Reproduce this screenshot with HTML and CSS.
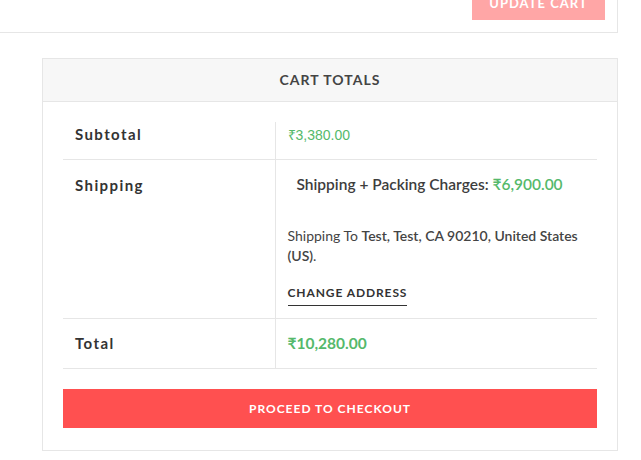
FILE: index.html
```html
<!DOCTYPE html>
<html>
<head>
<meta charset="utf-8">
<link rel="stylesheet" href="styles.css">
</head>
<body>
<div class="cart-actions">
  <button class="btn-update">UPDATE CART</button>
</div>
<div class="cart-totals">
  <h2 class="totals-title">CART TOTALS</h2>
  <div class="totals-body">
    <table class="totals-table">
      <tr class="row-subtotal">
        <th>Subtotal</th>
        <td><span class="amount-light">₹3,380.00</span></td>
      </tr>
      <tr class="row-shipping">
        <th>Shipping</th>
        <td>
          <div class="ship-method">Shipping + Packing Charges: <span class="amount">₹6,900.00</span></div>
          <p class="ship-dest">Shipping To <strong>Test, Test, CA 90210, United States (US)</strong>.</p>
          <a class="change-address">CHANGE ADDRESS</a>
        </td>
      </tr>
      <tr class="row-total">
        <th>Total</th>
        <td><span class="amount-strong">₹10,280.00</span></td>
      </tr>
    </table>
    <a class="btn-checkout">PROCEED TO CHECKOUT</a>
  </div>
</div>
</body>
</html>
```
FILE: styles.css
```css
html, body {
  margin: 0;
  padding: 0;
  background: #fff;
  overflow: hidden;
}
body {
  font-family: Lato, "Noto Sans", sans-serif;
  color: #444;
}
.cart-actions {
  width: 618px;
  height: 33px;
  border-right: 1px solid #e6e6e6;
  border-bottom: 1px solid #e6e6e6;
  display: flex;
  justify-content: flex-end;
  align-items: flex-end;
  padding-right: 12px;
  box-sizing: border-box;
}
.btn-update {
  width: 133px;
  height: 34px;
  margin-bottom: 12px;
  border: 0;
  background: #ff5050;
  opacity: 0.5;
  color: #fff;
  font-family: Lato, sans-serif;
  font-weight: 700;
  font-size: 13px;
  letter-spacing: 1px;
  padding: 0;
  flex-shrink: 0;
}
.cart-totals {
  margin: 25px 0 0 42px;
  width: 576px;
  box-sizing: border-box;
  border: 1px solid #e6e6e6;
}
.totals-title {
  margin: 0;
  height: 42px;
  background: #f7f7f7;
  border-bottom: 1px solid #e6e6e6;
  text-align: center;
  font-size: 14px;
  font-weight: 700;
  letter-spacing: 1px;
  line-height: 42px;
  color: #444;
}
.totals-body {
  padding: 20px 20px 22px;
}
.totals-table {
  width: 534px;
  border-collapse: collapse;
}
.totals-table th {
  width: 212px;
  box-sizing: border-box;
  text-align: left;
  vertical-align: top;
  font-size: 15px;
  font-weight: 700;
  letter-spacing: 1.4px;
  line-height: 22px;
  color: #333;
  padding: 0 12px;
  border-bottom: 1px solid #e6e6e6;
}
.totals-table td {
  vertical-align: top;
  padding: 0 12px;
  line-height: 22px;
  border-left: 1px solid #e6e6e6;
  border-bottom: 1px solid #e6e6e6;
}
.row-subtotal th, .row-subtotal td {
  padding-top: 1px;
  padding-bottom: 13px;
}
.row-shipping th {
  padding-top: 14px;
}
.row-shipping td {
  padding-top: 13px;
  padding-bottom: 12px;
}
.row-total th, .row-total td {
  padding-top: 13px;
  padding-bottom: 14px;
}
.amount-light {
  font-family: "Liberation Sans", Arial, sans-serif;
  font-size: 14px;
  color: #55b96b;
}
.ship-method {
  padding-left: 9px;
  font-size: 15.5px;
  font-weight: 600;
  color: #3d3d3d;
}
.amount {
  color: #55b96b;
}
.ship-dest {
  margin: 31px 0 0;
  font-size: 14px;
  line-height: 20px;
  color: #444;
}
.ship-dest strong {
  font-weight: 600;
}
.change-address {
  display: inline-block;
  margin-top: 18px;
  font-size: 12px;
  font-weight: 700;
  letter-spacing: 0.9px;
  line-height: 18px;
  color: #333;
  padding-bottom: 3px;
  border-bottom: 1px solid #333;
}
.amount-strong {
  font-size: 15.5px;
  font-weight: 700;
  color: #55b96b;
}
.btn-checkout {
  display: block;
  margin-top: 20px;
  height: 39px;
  line-height: 39px;
  background: #ff5050;
  color: #fff;
  text-align: center;
  font-size: 12px;
  font-weight: 700;
  letter-spacing: 1px;
}
```
